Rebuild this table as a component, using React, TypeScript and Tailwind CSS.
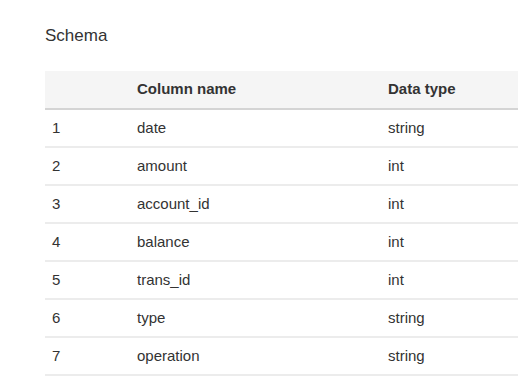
import React from 'react';

const rows = [
  { n: 1, name: 'date', type: 'string' },
  { n: 2, name: 'amount', type: 'int' },
  { n: 3, name: 'account_id', type: 'int' },
  { n: 4, name: 'balance', type: 'int' },
  { n: 5, name: 'trans_id', type: 'int' },
  { n: 6, name: 'type', type: 'string' },
  { n: 7, name: 'operation', type: 'string' },
];

const App = () => {
  return (
    <div className="w-[518px] h-[385px] overflow-hidden bg-white text-[#333] font-['Liberation_Sans',Arial,sans-serif]">
      <div className="pl-[45px] pt-[25px]">
        {/* Title */}
        <h2 className="text-[17px] leading-[22px] mb-[24px]">Schema</h2>

        {/* Table */}
        <table className="w-[560px] border-collapse text-[15px]">
          <thead>
            <tr className="bg-[#f5f5f5] border-b-2 border-[#d4d4d4]">
              <th className="h-[38px] w-[85px] px-[7px] text-left font-bold"></th>
              <th className="h-[38px] w-[251px] px-[7px] text-left font-bold">Column name</th>
              <th className="h-[38px] px-[7px] text-left font-bold">Data type</th>
            </tr>
          </thead>
          <tbody>
            {rows.map((row) => (
              <tr key={row.n} className="border-b-2 border-[#ececec]">
                <td className="h-[38px] px-[7px]">{row.n}</td>
                <td className="h-[38px] px-[7px]">{row.name}</td>
                <td className="h-[38px] px-[7px]">{row.type}</td>
              </tr>
            ))}
          </tbody>
        </table>
      </div>
    </div>
  );
};

export default App;
